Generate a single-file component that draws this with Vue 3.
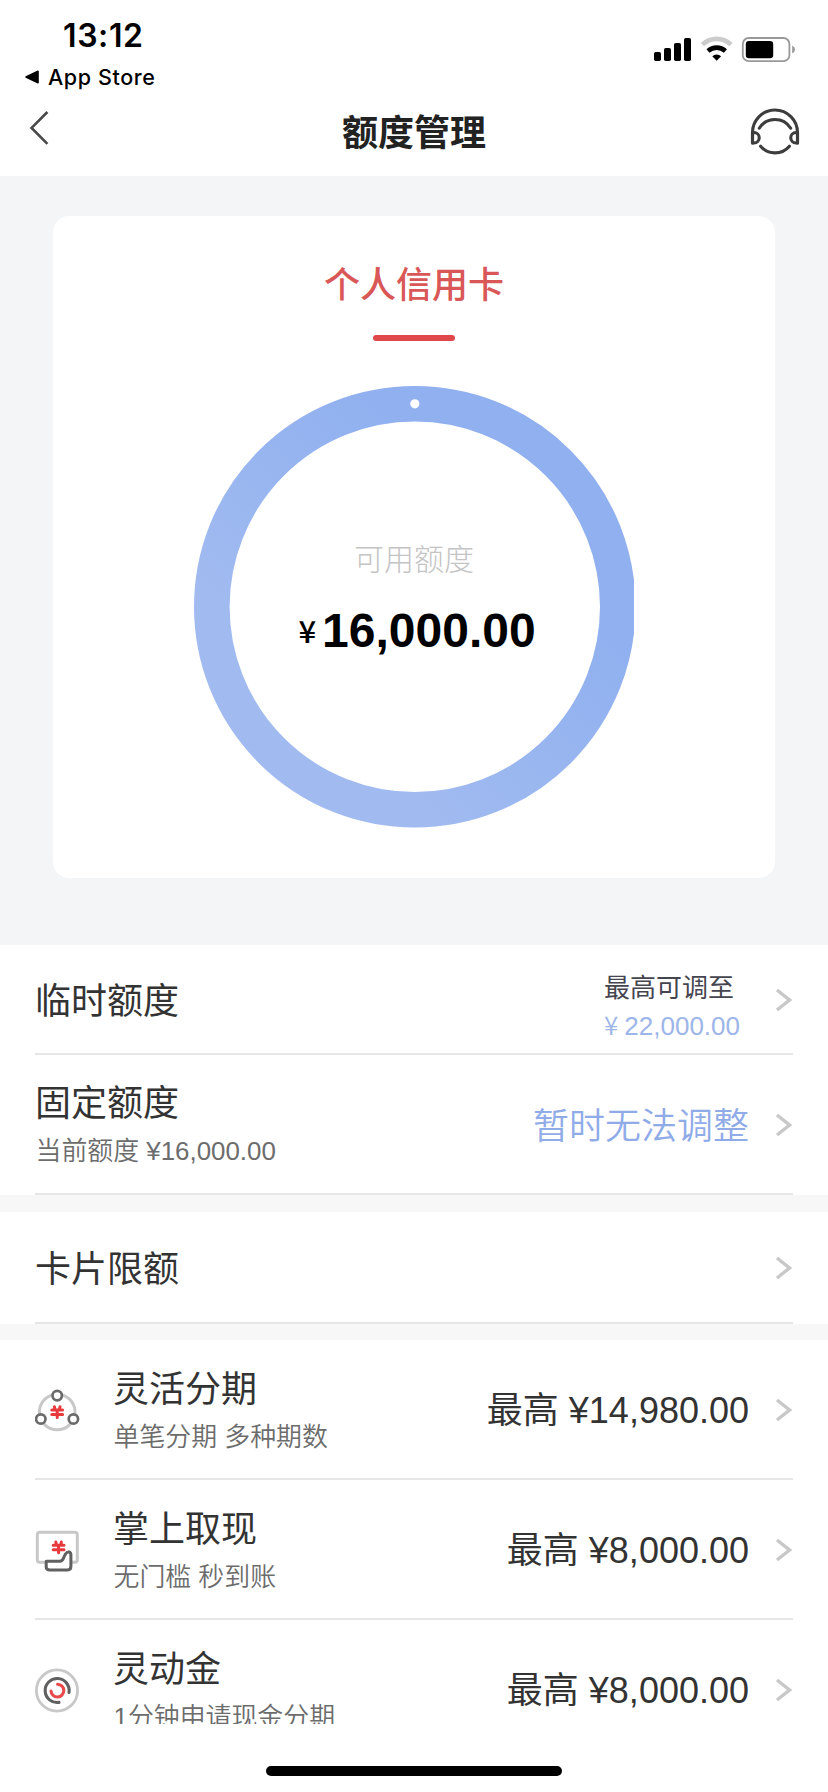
<script setup>
const products = [
  { icon: 'ring', title: '灵活分期', desc: '单笔分期 多种期数', amount: '¥14,980.00' },
  { icon: 'hand', title: '掌上取现', desc: '无门槛 秒到账', amount: '¥8,000.00' },
  { icon: 'swirl', title: '灵动金', desc: '1分钟申请现金分期', amount: '¥8,000.00' },
]
</script>

<template>
  <div class="screen">
    <header class="top">
      <div class="status">
        <div class="status-left">
          <div class="time">13:12</div>
          <div class="back-app">
            <svg width="15" height="14" viewBox="0 0 15 14"><path d="M1 7 L13 1.3 V12.7 Z" fill="#000" stroke="#000" stroke-width="1.6" stroke-linejoin="round" /></svg>
            <span>App Store</span>
          </div>
        </div>
        <svg class="indicators" width="144" height="28" viewBox="0 0 144 28">
          <rect x="3" y="16" width="7" height="9" rx="1.8" />
          <rect x="13" y="12" width="7" height="13" rx="1.8" />
          <rect x="23" y="7" width="7" height="18" rx="1.8" />
          <rect x="33" y="2" width="7" height="23" rx="1.8" />
          <path d="M51.4 8.6 A20.5 20.5 0 0 1 80 8.6" fill="none" stroke="#ccc" stroke-width="4.8" />
          <path d="M57 15 A12.8 12.8 0 0 1 74.4 15" fill="none" stroke="#000" stroke-width="4.6" />
          <path d="M61.3 20.2 A6.6 6.6 0 0 1 70.1 20.2 L65.7 24.8 Z" />
          <rect x="91.8" y="2" width="46.6" height="23.2" rx="6" fill="none" stroke="#999" stroke-width="1.8" />
          <rect x="94.8" y="5" width="27.4" height="17.2" rx="3.2" />
          <path d="M141.2 9.6 Q144 11 144 13.6 Q144 16.2 141.2 17.6 Z" fill="#999" />
        </svg>
      </div>
      <nav class="nav">
        <svg class="back" width="20" height="36" viewBox="0 0 20 36"><path d="M18.4 2 L2.6 17.9 L18.4 33.8" fill="none" stroke="#484848" stroke-width="2.6" /></svg>
        <h1>额度管理</h1>
        <svg class="service" width="50" height="50" viewBox="0 0 50 50" fill="none" stroke="#3d3d3d" stroke-width="3.1" stroke-linecap="round" stroke-linejoin="round">
          <path d="M2.5 35 V24.5 A22.5 22.5 0 0 1 47.5 24.5 V35" />
          <path d="M2.5 24.5 H4 A5.2 5.2 0 0 1 4 35 H2.5 Z" />
          <path d="M47.5 24.5 H46 A5.2 5.2 0 0 0 46 35 H47.5 Z" />
          <path d="M9.3 20.2 A18.5 18.5 0 0 1 40.7 20.2" />
          <path d="M10.6 38.2 A18.8 18.8 0 0 0 39.4 38.2" />
        </svg>
      </nav>
    </header>

    <section class="hero">
      <div class="card">
        <div class="card-title">个人信用卡</div>
        <div class="bar"></div>
        <div class="gauge">
          <svg width="440" height="442" viewBox="0 0 440 442">
            <defs>
              <linearGradient id="ringFill" x1="0.25" y1="0.75" x2="0.7" y2="0.3">
                <stop offset="0" stop-color="#a1bbf0" />
                <stop offset="1" stop-color="#90b0ef" />
              </linearGradient>
            </defs>
            <circle cx="220.8" cy="220.8" r="203" fill="none" stroke="url(#ringFill)" stroke-width="35.6" />
            <circle cx="220.8" cy="17.8" r="4.6" fill="#fff" />
          </svg>
          <div class="gauge-text">
            <div class="gauge-label">可用额度</div>
            <div class="gauge-value"><span class="yen">¥</span><span>16,000.00</span></div>
          </div>
        </div>
      </div>
    </section>

    <main class="list">
      <div class="row first">
        <div class="title alone">临时额度</div>
        <div class="limit">
          <div class="limit-label">最高可调至</div>
          <div class="limit-value"><span class="yen-sm">¥</span><span>22,000.00</span></div>
        </div>
        <svg class="chev" width="17" height="24" viewBox="0 0 17 24"><path d="M2 2 L14.5 12 L2 22" /></svg>
      </div>
      <div class="row">
        <div class="texts fixed-limit">
          <div class="title">固定额度</div>
          <div class="desc">当前额度 ¥16,000.00</div>
        </div>
        <div class="notice">暂时无法调整</div>
        <svg class="chev" width="17" height="24" viewBox="0 0 17 24"><path d="M2 2 L14.5 12 L2 22" /></svg>
      </div>
      <div class="band"></div>
      <div class="row single">
        <div class="title alone">卡片限额</div>
        <svg class="chev" width="17" height="24" viewBox="0 0 17 24"><path d="M2 2 L14.5 12 L2 22" /></svg>
      </div>
      <div class="band"></div>
      <div v-for="p in products" :key="p.title" class="row">
        <svg class="icon" width="46" height="46" viewBox="0 0 46 46" fill="none" stroke-linecap="round" stroke-linejoin="round">
          <template v-if="p.icon === 'ring'">
            <circle cx="22.2" cy="24" r="17.8" stroke="#c8c8c8" stroke-width="3" />
            <g fill="#fff" stroke="#6a6a6a" stroke-width="2.7">
              <circle cx="22.2" cy="7.6" r="4.7" />
              <circle cx="5.8" cy="31" r="4.7" />
              <circle cx="38.4" cy="31" r="4.7" />
            </g>
            <path d="M19.4 18.8 L20.2 22 M25 18.8 L24.2 22 M16.8 22 H27.6 M16.8 26.5 H27.6 M22.2 22 V29.6" stroke="#e8393c" stroke-width="3" />
          </template>
          <template v-else-if="p.icon === 'hand'">
            <rect x="2.3" y="4.2" width="40" height="30" rx="2.5" stroke="#c8c8c8" stroke-width="3" />
            <path d="M11.2 33.2 H25.2 Q27.7 32.7 28.9 29.2 L30.5 26 Q32 23.6 34.2 24 Q36.3 24.6 35.9 28.6 V38.6 Q35.9 42 32.5 42 H14.7 Q11.2 42 11.2 39.1 Z" fill="#fff" stroke="#606060" stroke-width="3" />
            <path d="M20.8 14 L21.6 17.2 M26.4 14 L25.6 17.2 M18.2 17.2 H29 M18.2 21.7 H29 M23.6 17.2 V24.8" stroke="#e8393c" stroke-width="3" />
          </template>
          <template v-else>
            <circle cx="22" cy="22.5" r="20.6" stroke="#c8c8c8" stroke-width="2.8" />
            <path d="M34 24.5 A12 12 0 1 0 24 34.4" stroke="#606060" stroke-width="3.1" />
            <path d="M22.6 16.2 A6.4 6.4 0 1 1 16 23" stroke="#e8494b" stroke-width="3.1" />
          </template>
        </svg>
        <div class="texts with-icon">
          <div class="title">{{ p.title }}</div>
          <div class="desc">{{ p.desc }}</div>
        </div>
        <div class="amount">最高 {{ p.amount }}</div>
        <svg class="chev" width="17" height="24" viewBox="0 0 17 24"><path d="M2 2 L14.5 12 L2 22" /></svg>
      </div>
    </main>

    <footer class="home"><div class="home-bar"></div></footer>
  </div>
</template>

<style>
body {
  margin: 0;
  background: #fff;
}
</style>

<style scoped>
.screen {
  width: 828px;
  height: 1792px;
  display: flex;
  flex-direction: column;
  overflow: hidden;
  background: #fff;
  color: #333;
  font-family: "Liberation Sans", "Noto Sans CJK SC", sans-serif;
}
.top {
  height: 176px;
  flex: none;
}
.status {
  height: 92px;
  display: flex;
  justify-content: space-between;
  color: #000;
  font-family: Inter, sans-serif;
}
.status-left {
  padding-top: 16px;
}
.time {
  padding-left: 63px;
  font-size: 32px;
  font-weight: 600;
  line-height: 40px;
  letter-spacing: 0.6px;
}
.back-app {
  display: flex;
  align-items: center;
  gap: 8px;
  padding-left: 25px;
  height: 41px;
  font-size: 21.5px;
  font-weight: 500;
  letter-spacing: 0.6px;
}
.indicators {
  margin: 36px 33px 0 0;
}
.nav {
  height: 80px;
  padding: 0 28px 0 29px;
  display: flex;
  align-items: center;
  justify-content: space-between;
}
.nav .back {
  margin: -8px 29px 0 0;
}
.nav .service {
  margin-top: 2px;
}
.nav h1 {
  margin: 4px 0 0;
  font-size: 36px;
  line-height: 50px;
  font-weight: 600;
  color: #222;
}
.hero {
  height: 769px;
  flex: none;
  box-sizing: border-box;
  padding: 40px 53px 0;
  background: #f4f5f7;
}
.card {
  height: 662px;
  display: flex;
  flex-direction: column;
  align-items: center;
  border-radius: 16px;
  background: #fff;
}
.card-title {
  margin-top: 45px;
  font-size: 36px;
  line-height: 50px;
  font-weight: 500;
  color: #d95757;
}
.bar {
  width: 82px;
  height: 6px;
  margin-top: 24px;
  border-radius: 3px;
  background: #e0474b;
}
.gauge {
  display: grid;
  width: 440px;
  margin-top: 45px;
}
.gauge > * {
  grid-area: 1 / 1;
}
.gauge-text {
  padding-top: 153px;
  text-align: center;
}
.gauge-label {
  font-size: 30px;
  line-height: 42px;
  font-weight: 300;
  color: #c4c4c4;
}
.gauge-value {
  display: flex;
  justify-content: center;
  align-items: baseline;
  gap: 6px;
  margin-top: 22px;
  padding-left: 6px;
  font-size: 48px;
  line-height: 56px;
  font-weight: 700;
  color: #000;
}
.yen {
  font-family: "Noto Sans CJK SC", sans-serif;
  font-size: 31px;
  line-height: 1;
  font-weight: 500;
  position: relative;
  top: -4px;
}
.list {
  height: 779px;
  flex: none;
  overflow: hidden;
}
.row {
  height: 140px;
  box-sizing: border-box;
  margin: 0 35px;
  border-bottom: 2px solid #e6e6e6;
  display: flex;
  align-items: center;
}
.first {
  height: 110px;
}
.single {
  height: 112px;
}
.band {
  height: 16.5px;
  background: #f7f7f7;
}
.icon {
  margin-top: 4px;
}
.title {
  font-size: 36px;
  line-height: 50px;
}
.alone {
  padding-top: 6px;
}
.texts {
  padding-top: 1px;
}
.fixed-limit {
  padding: 0 0 1px;
}
.desc {
  padding-left: 0.5px;
  font-size: 25.9px;
  line-height: 36px;
  margin-top: 4px;
  color: #6c6c6c;
  font-weight: 350;
}
.with-icon {
  margin-left: 32px;
}
.chev {
  margin: 2px 1px 0 auto;
  flex: none;
  fill: none;
  stroke: #c8c8c8;
  stroke-width: 3.4;
}
.notice,
.amount,
.limit {
  margin-left: auto;
}
.notice + .chev,
.amount + .chev {
  margin-left: 26px;
}
.limit + .chev {
  margin-left: 35px;
}
.notice,
.amount {
  padding-top: 4px;
  font-size: 36px;
  line-height: 50px;
}
.notice {
  padding-top: 6px;
  font-weight: 350;
  color: #8fabe8;
}
.limit {
  padding-top: 16px;
  font-size: 26px;
}
.limit-label {
  line-height: 38px;
  color: #45454f;
}
.limit-value {
  display: flex;
  align-items: baseline;
  gap: 6px;
  line-height: 38px;
  color: #9db5e8;
}
.yen-sm {
  font-family: "Noto Sans CJK SC", sans-serif;
  line-height: 1;
  font-weight: 350;
}
.home {
  height: 68px;
  display: flex;
  justify-content: center;
  align-items: flex-start;
}
.home-bar {
  width: 296px;
  height: 10px;
  margin-top: 42px;
  border-radius: 5px;
  background: #000;
}
</style>
